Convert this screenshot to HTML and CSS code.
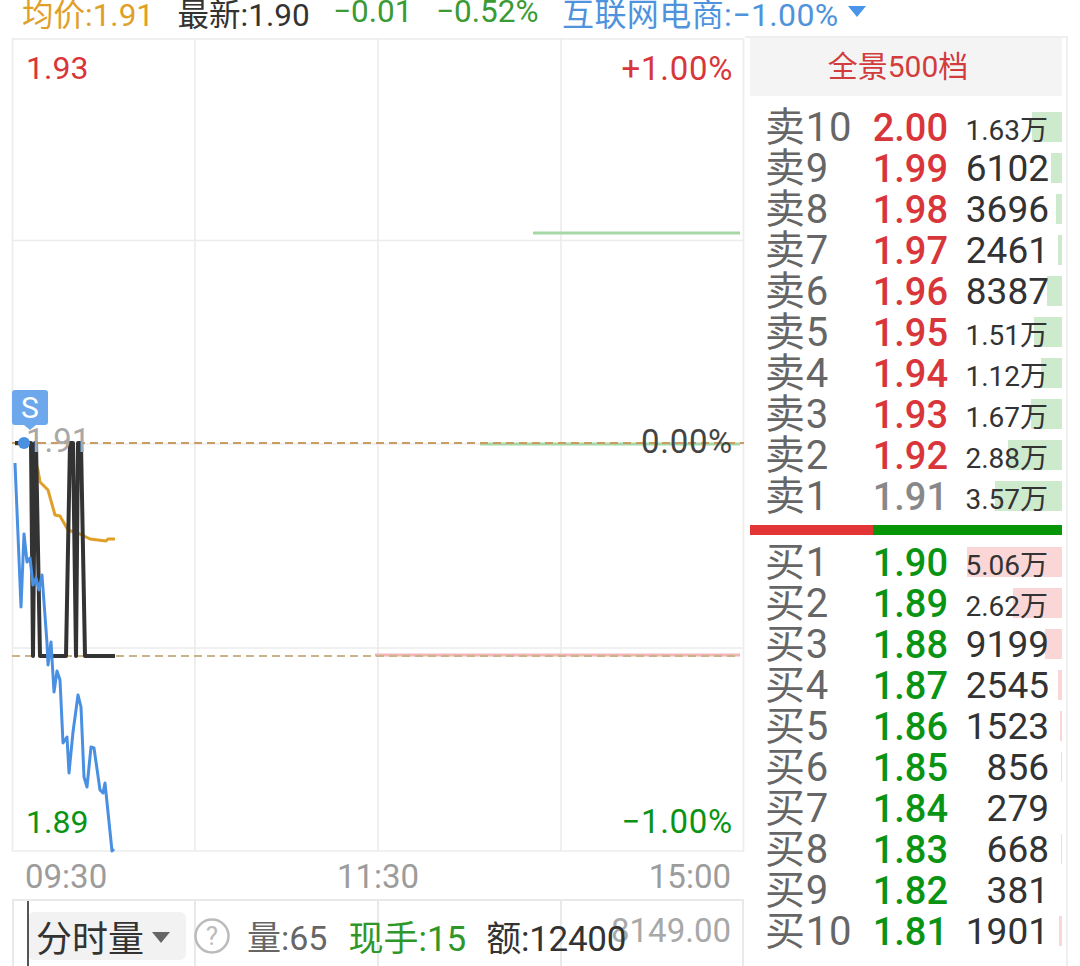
FILE: index.html
```html
<!DOCTYPE html>
<html lang="zh-CN">
<head>
    <meta charset="UTF-8">
    <title>分时</title>
    <link rel="stylesheet" href="styles.css">
</head>
<body>

<header class="quote">
    <span class="avg">均价:1.91</span>
    <span class="last">最新:1.90</span>
    <span class="down">−0.01</span>
    <span class="down">−0.52%</span>
    <span class="sector">互联网电商:−1.00%</span>
    <i class="sector-arrow"></i>
</header>

<main class="screen">
    <section class="left">
        <!-- Price chart -->
        <div class="chart">
            <svg class="plot" width="732" height="813" viewBox="12 38 732 813">
                <g class="grid">
                    <path d="M12.5 38V851M195 38V851M378 38V851M561 38V851M743.5 38V851"/>
                    <path d="M12 39H744M12 240.5H744M12 444H744M12 648H744M12 851H744"/>
                </g>
                <path class="ref-green" d="M533 233H740"/>
                <path class="ref-green" d="M480 444H740"/>
                <path class="ref-red" d="M375 655H740"/>
                <path class="dash" d="M12 443H744"/>
                <path class="dash dash-low" d="M12 656H740"/>
                <polyline class="line-avg" points="15,444 30,444 33,455 38,470 40,482 48,490 55,515 60,516 68,530 80,534 90,539 106,541 108,539 115,539"/>
                <polyline class="line-vol" points="15,443 31,443 33,656 35,443 36,443 40,656 66,656 70,443 73,443 76,656 78,443 81,443 85,656 115,656"/>
                <polyline class="line-price" points="15,463 21,607 24,534 27,562 30,558 33,585 36,578 39,590 42,575 47,643 48,665 51,642 54,692 57,671 60,680 63,743 67,737 69,773 73,732 78,695 81,707 84,777 87,787 91,747 94,748 100,790 103,793 105,783 112,851 114,849"/>
                <circle class="dot" cx="24" cy="443" r="6"/>
            </svg>
            <span class="label red top-left">1.93</span>
            <span class="label red top-right">+1.00%</span>
            <span class="label grey mid-left">1.91</span>
            <span class="label dark mid-right">0.00%</span>
            <span class="label green bottom-left">1.89</span>
            <span class="label green bottom-right">−1.00%</span>
            <div class="signal">S</div>
        </div>

        <div class="axis">
            <span>09:30</span>
            <span>11:30</span>
            <span>15:00</span>
        </div>

        <!-- Volume header -->
        <div class="vol">
            <div class="vol-select">分时量<i class="vol-arrow"></i></div>
            <svg class="help" width="36" height="36" viewBox="0 0 36 36">
                <circle cx="18" cy="18" r="16.5"/>
                <text x="18" y="27" text-anchor="middle">?</text>
            </svg>
            <span class="vol-qty">量:65</span>
            <span class="vol-now">现手:15</span>
            <span class="vol-amt">额:12400</span>
            <span class="vol-max">8149.00</span>
        </div>
    </section>

    <!-- Order book -->
    <aside class="book">
        <div class="book-title">全景500档</div>
        <div class="levels">
            <div class="level"><b class="sell-bar" style="width:30px"></b><span class="name">卖10</span><span class="price red">2.00</span><span class="qty small">1.63万</span></div>
            <div class="level"><b class="sell-bar" style="width:11px"></b><span class="name">卖9</span><span class="price red">1.99</span><span class="qty">6102</span></div>
            <div class="level"><b class="sell-bar" style="width:6px"></b><span class="name">卖8</span><span class="price red">1.98</span><span class="qty">3696</span></div>
            <div class="level"><b class="sell-bar" style="width:4px"></b><span class="name">卖7</span><span class="price red">1.97</span><span class="qty">2461</span></div>
            <div class="level"><b class="sell-bar" style="width:15px"></b><span class="name">卖6</span><span class="price red">1.96</span><span class="qty">8387</span></div>
            <div class="level"><b class="sell-bar" style="width:28px"></b><span class="name">卖5</span><span class="price red">1.95</span><span class="qty small">1.51万</span></div>
            <div class="level"><b class="sell-bar" style="width:21px"></b><span class="name">卖4</span><span class="price red">1.94</span><span class="qty small">1.12万</span></div>
            <div class="level"><b class="sell-bar" style="width:31px"></b><span class="name">卖3</span><span class="price red">1.93</span><span class="qty small">1.67万</span></div>
            <div class="level"><b class="sell-bar" style="width:54px"></b><span class="name">卖2</span><span class="price red">1.92</span><span class="qty small">2.88万</span></div>
            <div class="level"><b class="sell-bar" style="width:67px"></b><span class="name">卖1</span><span class="price grey">1.91</span><span class="qty small">3.57万</span></div>
        </div>
        <div class="ratio">
            <div class="ratio-buy"></div>
            <div class="ratio-sell"></div>
        </div>
        <div class="levels">
            <div class="level"><b class="buy-bar" style="width:95px"></b><span class="name">买1</span><span class="price green">1.90</span><span class="qty small">5.06万</span></div>
            <div class="level"><b class="buy-bar" style="width:49px"></b><span class="name">买2</span><span class="price green">1.89</span><span class="qty small">2.62万</span></div>
            <div class="level"><b class="buy-bar" style="width:17px"></b><span class="name">买3</span><span class="price green">1.88</span><span class="qty">9199</span></div>
            <div class="level"><b class="buy-bar" style="width:4px"></b><span class="name">买4</span><span class="price green">1.87</span><span class="qty">2545</span></div>
            <div class="level"><b class="buy-bar" style="width:2px"></b><span class="name">买5</span><span class="price green">1.86</span><span class="qty">1523</span></div>
            <div class="level"><b class="buy-bar" style="width:1px"></b><span class="name">买6</span><span class="price green">1.85</span><span class="qty">856</span></div>
            <div class="level"><span class="name">买7</span><span class="price green">1.84</span><span class="qty">279</span></div>
            <div class="level"><b class="buy-bar" style="width:1px"></b><span class="name">买8</span><span class="price green">1.83</span><span class="qty">668</span></div>
            <div class="level"><span class="name">买9</span><span class="price green">1.82</span><span class="qty">381</span></div>
            <div class="level"><b class="buy-bar" style="width:3px"></b><span class="name">买10</span><span class="price green">1.81</span><span class="qty">1901</span></div>
        </div>
    </aside>
</main>

</body>
</html>
```

FILE: styles.css
```css
body {
    margin: 0;
    width: 1080px;
    height: 966px;
    overflow: hidden;
    background-color: white;
    font-family: Roboto, "Noto Sans CJK SC", sans-serif;
    color: #333;
}

.quote {
    display: flex;
    align-items: center;
    height: 23px;
    padding: 0 0 13px 22px;
    font-size: 31.5px;
    white-space: nowrap;
}

.quote span {
    margin-right: 23.5px;
}

.avg { color: #e0a028; }
.last { color: #333; }
.down { color: #3a9a34; }

.quote .sector {
    margin-right: 9px;
    color: #4f93dc;
    font-size: 32px;
    letter-spacing: 0.4px;
}

.sector-arrow {
    width: 0;
    height: 0;
    border-left: 9px solid transparent;
    border-right: 9px solid transparent;
    border-top: 11px solid #4a94ea;
}

.screen {
    display: flex;
    height: 930px;
    margin-top: 2px;
}

.left {
    width: 732px;
    margin-left: 12px;
    flex-shrink: 0;
}

.chart {
    position: relative;
    width: 732px;
    height: 813px;
}

.plot {
    position: absolute;
    top: 0;
    left: 0;
    overflow: visible;
}

.grid path {
    fill: none;
    stroke: #ececec;
    stroke-width: 1.6;
}

.ref-green {
    stroke: #a5d8a5;
    stroke-width: 3;
}

.ref-red {
    stroke: #f3b5b5;
    stroke-width: 3;
}

.dash {
    stroke: #c99c62;
    stroke-width: 2;
    stroke-dasharray: 8 5;
}

.dash-low {
    stroke: #c9b48a;
}

polyline {
    fill: none;
    stroke-linejoin: round;
}

.line-avg { stroke: #e0a028; stroke-width: 3; }
.line-vol { stroke: #333; stroke-width: 4; }
.line-price { stroke: #4a90e2; stroke-width: 3; }
.dot { fill: #4a90e2; }

.label {
    position: absolute;
    font-size: 33px;
    line-height: 40px;
}

.red { color: #d8363a; }
.green { color: #0a9414; }
.grey { color: #888; }
.dark { color: #444; }

.top-left { left: 14px; top: 10px; font-size: 32px; }
.top-right { right: 11px; top: 11px; letter-spacing: 0.7px; }
.mid-left { left: 14px; top: 383px; color: #a8a8a8; }
.mid-right { right: 11px; top: 384px; letter-spacing: 0.7px; }
.bottom-left { left: 14px; top: 764px; font-size: 32px; }
.bottom-right { right: 11px; top: 764px; letter-spacing: 0.7px; }

.signal {
    position: absolute;
    left: 0;
    top: 352px;
    width: 36px;
    height: 35px;
    border-radius: 3px;
    background-color: #6ea8ec;
    color: white;
    font-size: 30px;
    line-height: 35px;
    text-align: center;
}

.signal::after {
    content: "";
    position: absolute;
    left: 12px;
    bottom: -5px;
    border-left: 6px solid transparent;
    border-right: 6px solid transparent;
    border-top: 5px solid #6ea8ec;
}

.axis {
    display: flex;
    justify-content: space-between;
    align-items: center;
    height: 50px;
    padding: 3px 13px 0;
    border-bottom: 2px solid #e9e9e9;
    box-sizing: border-box;
    font-size: 33px;
    color: #9c9c9c;
}

.vol {
    position: relative;
    display: flex;
    align-items: center;
    height: 65px;
    padding-left: 16px;
    white-space: nowrap;
    font-size: 35px;
    background-image: linear-gradient(#e9e9e9, #e9e9e9), linear-gradient(#e9e9e9, #e9e9e9), linear-gradient(#e9e9e9, #e9e9e9), linear-gradient(#e9e9e9, #e9e9e9), linear-gradient(#e9e9e9, #e9e9e9);
    background-size: 2px 100%;
    background-repeat: no-repeat;
    background-position: 0 0, 182px 0, 365px 0, 548px 0, 730px 0;
}

.vol::before {
    content: "";
    position: absolute;
    left: 15px;
    top: 0;
    bottom: 0;
    width: 2px;
    background-color: #555;
}

.vol-select {
    display: flex;
    align-items: center;
    width: 150px;
    height: 48px;
    margin-top: 5px;
    padding-left: 8px;
    border-radius: 6px;
    background-color: #f2f2f2;
    font-size: 36px;
    color: #333;
}

.vol-arrow {
    margin-left: 8px;
    margin-top: 3px;
    border-left: 9px solid transparent;
    border-right: 9px solid transparent;
    border-top: 11px solid #666;
}

.help {
    margin: 5px 0 0 8px;
    flex-shrink: 0;
}

.help circle {
    fill: none;
    stroke: #bbb;
    stroke-width: 2.5;
}

.help text {
    font-size: 26px;
    fill: #bbb;
}

.vol-qty { margin: 3px 0 0 17px; color: #666; font-size: 34px; }
.vol-now { margin: 3px 0 0 21px; color: #2f962a; }
.vol-amt { margin: 3px 0 0 20px; color: #333; position: relative; z-index: 1; letter-spacing: -0.3px; }

.vol-max {
    position: absolute;
    right: 13px;
    top: 10px;
    color: #a8a8a8;
    font-size: 33px;
}

.book {
    width: 323px;
    margin-left: 1px;
    margin-top: -2px;
    padding: 0 4px 0 5px;
    border-top: 2px solid #efefef;
    border-right: 2px solid #efefef;
    box-sizing: border-box;
}

.book-title {
    height: 58px;
    padding-right: 16px;
    background-color: #f4f4f4;
    color: #d23c3c;
    font-size: 30px;
    line-height: 58px;
    text-align: center;
}

.levels {
    padding-top: 11px;
}

.level {
    position: relative;
    display: flex;
    align-items: center;
    height: 41px;
    white-space: nowrap;
}

.sell-bar, .buy-bar {
    position: absolute;
    right: 0;
    top: 5px;
    height: 30px;
}

.sell-bar { background-color: #cdeacd; }
.buy-bar { background-color: #fad6d6; }

.name {
    position: relative;
    width: 110px;
    margin-bottom: 8px;
    padding-left: 15px;
    box-sizing: border-box;
    font-size: 40px;
    letter-spacing: 0.8px;
    color: #666;
}

.price {
    position: relative;
    width: 88px;
    font-size: 38px;
    font-weight: 500;
    text-align: right;
}

.qty {
    position: relative;
    flex: 1;
    margin-right: 13px;
    font-size: 37px;
    text-align: right;
    color: #333;
}

.qty.small {
    margin-right: 14px;
    font-size: 28px;
}

.ratio {
    display: flex;
    height: 10px;
    margin-top: 8px;
}

.ratio-buy { width: 123px; background-color: #e33535; }
.ratio-sell { flex: 1; background-color: #079607; }

.ratio + .levels {
    padding-top: 7px;
}
```
